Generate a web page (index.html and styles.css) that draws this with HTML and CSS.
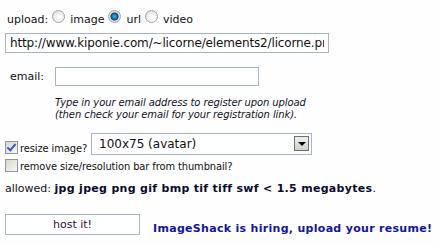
FILE: index.html
```html
<!DOCTYPE html>
<html>
  <head>
    <meta charset="utf-8" />
    <title>ImageShack upload</title>
    <link rel="stylesheet" href="styles.css">
  </head>
  <body>
    <form class="upload-form">
      <div class="mode-row">
        <span class="label">upload:</span>
        <input type="radio" name="mode" class="radio" id="mode-image" />
        <label for="mode-image">image</label>
        <input type="radio" name="mode" class="radio" id="mode-url" checked />
        <label for="mode-url">url</label>
        <input type="radio" name="mode" class="radio" id="mode-video" />
        <label for="mode-video">video</label>
      </div>
      <input
        type="text"
        class="field url-field"
        value="http://www.kiponie.com/~licorne/elements2/licorne.png"
      />
      <div class="email-row">
        <label class="email-label" for="email">email:</label>
        <input type="text" id="email" class="field email-field" />
      </div>
      <p class="note">
        Type in your email address to register upon upload<br />
        (then check your email for your registration link).
      </p>
      <div class="check-row resize-row">
        <input type="checkbox" class="check" id="resize" checked />
        <label for="resize" class="check-label">resize image?</label>
        <div class="select-wrap">
          <select class="select">
            <option>100x75 (avatar)</option>
          </select>
          <span class="select-arrow"></span>
        </div>
      </div>
      <div class="check-row">
        <input type="checkbox" class="check" id="nobar" />
        <label for="nobar" class="check-label">remove size/resolution bar from thumbnail?</label>
      </div>
      <p class="allowed">
        allowed: <b>jpg jpeg png gif bmp tif tiff swf &lt; 1.5 megabytes</b>.
      </p>
      <div class="submit-row">
        <button type="button" class="host-button">host it!</button>
        <a class="hiring" href="#">ImageShack is hiring, upload your resume!</a>
      </div>
    </form>
  </body>
</html>
```

FILE: styles.css
```css
* {
  margin: 0;
  padding: 0;
  box-sizing: border-box;
}
body {
  background: #fefefe;
  font-family: "DejaVu Sans", Verdana, sans-serif;
  font-size: 11px;
  color: #111;
}
.upload-form {
  display: flex;
  flex-direction: column;
  padding: 0 5px;
}
.mode-row {
  display: flex;
  align-items: center;
  height: 16px;
  margin-top: 11px;
  padding-left: 2px;
}
.mode-row label {
  margin: 0 4px 0 5px;
}
.label {
  margin-right: 4px;
}
.radio {
  appearance: none;
  width: 13px;
  height: 13px;
  border-radius: 50%;
  border: 1px solid #9fa6ad;
  background: radial-gradient(circle at 60% 65%, #ffffff 10%, #dcdcd6 90%);
  position: relative;
  top: -3px;
}
.radio:checked {
  background: radial-gradient(circle at 50% 50%, #35c0f0 0, #1570b0 2.5px, #0b3f70 3.5px, #dcdcd6 4.5px, #f4f4f0 100%);
}
.field {
  border: 1px solid #a5b5c6;
  background: white;
  font-family: inherit;
  font-size: 11px;
  color: #111;
}
.url-field {
  width: 324px;
  height: 20px;
  margin-top: 6px;
  padding: 0 4px;
  font-size: 12px;
  letter-spacing: -0.15px;
}
.email-row {
  display: flex;
  align-items: center;
  margin-top: 14px;
}
.email-label {
  width: 50px;
  padding-left: 5px;
}
.email-field {
  width: 204px;
  height: 19px;
}
.note {
  font-style: italic;
  font-size: 10px;
  letter-spacing: -0.1px;
  line-height: 12px;
  margin: 11px 0 0 50px;
  color: #121226;
}
.check-row {
  display: flex;
  align-items: flex-end;
  margin-top: 4px;
}
.resize-row {
  margin-top: 12px;
}
.check {
  appearance: none;
  width: 13px;
  height: 13px;
  border: 1px solid #8e99a4;
  background: linear-gradient(135deg, #d8d8d2, #f6f6f2);
  position: relative;
  margin-bottom: 1px;
}
.check:checked::after {
  content: "";
  position: absolute;
  left: 3px;
  top: 0px;
  width: 3px;
  height: 7px;
  border: solid #3a5ab8;
  border-width: 0 2px 2px 0;
  transform: rotate(40deg);
}
.check-label {
  margin-left: 2px;
  line-height: 12px;
  font-family: "DejaVu Sans Condensed", "DejaVu Sans", sans-serif;
  letter-spacing: -0.1px;
}
.select-wrap {
  position: relative;
  margin-left: 4px;
}
.select {
  appearance: none;
  width: 221px;
  height: 22px;
  border: 1px solid #a5b5c6;
  background: white;
  font-family: inherit;
  font-size: 12px;
  color: #111;
  padding-left: 7px;
}
.select-arrow {
  position: absolute;
  right: 3px;
  top: 3px;
  width: 15px;
  height: 15px;
  border: 1px solid #6f6f6f;
  background: linear-gradient(#f0f0ec, #d0d0cc);
}
.select-arrow::after {
  content: "";
  position: absolute;
  left: 3px;
  top: 5px;
  border: 4px solid transparent;
  border-top: 4px solid #000;
  border-bottom: 0;
}
.allowed {
  margin-top: 9px;
  line-height: 14px;
}
.allowed b {
  color: #0a0a30;
  letter-spacing: 0.3px;
}
.submit-row {
  display: flex;
  align-items: center;
  margin-top: 18px;
}
.host-button {
  flex-shrink: 0;
  width: 135px;
  height: 21px;
  border: 1px solid #a5b5c6;
  background: white;
  font-family: inherit;
  font-size: 11px;
  color: #2a1040;
}
.hiring {
  margin: 8px 0 0 13px;
  white-space: nowrap;
  font-weight: bold;
  letter-spacing: 0.3px;
  color: #1414a0;
  text-decoration: none;
}
```
